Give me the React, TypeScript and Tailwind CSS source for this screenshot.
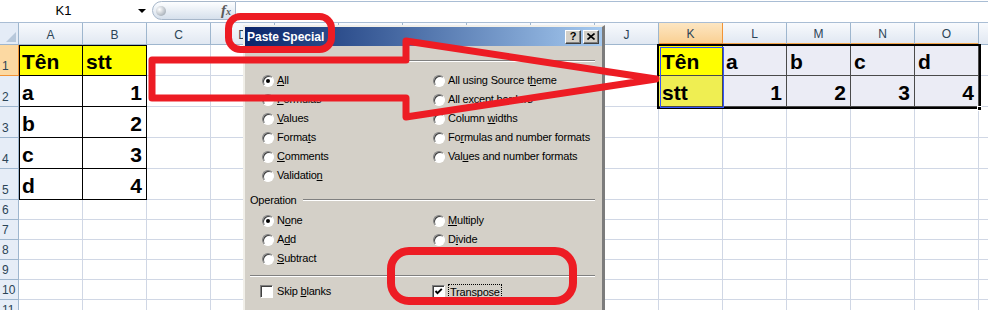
import React from "react";

const COLS = ["A", "B", "C", "D", "E", "F", "G", "H", "I", "J", "K", "L", "M", "N", "O", "P"];
const ROWS = [1, 2, 3, 4, 5, 6, 7, 8, 9, 10, 11];

const VALUES: Record<string, string> = {
  A1: "Tên", B1: "stt", A2: "a", B2: "1", A3: "b", B3: "2", A4: "c", B4: "3", A5: "d", B5: "4",
  K1: "Tên", L1: "a", M1: "b", N1: "c", O1: "d", K2: "stt", L2: "1", M2: "2", N2: "3", O2: "4",
};

const isNum = (v?: string) => !!v && /^\d+$/.test(v);

function cellClass(col: string, row: number) {
  const inLeft = (col === "A" || col === "B") && row <= 5;
  const inRight = ["K", "L", "M", "N", "O"].includes(col) && row <= 2;
  const cls: string[] = [];
  cls.push(inLeft ? "border-black" : inRight ? "border-[#4a4a4a]" : "border-[#d0d7e5]");
  if (inLeft) {
    if (col === "A" && row === 1) cls.push("shadow-[inset_1px_1px_0_#000]");
    else if (col === "A") cls.push("shadow-[inset_1px_0_0_#000]");
    else if (row === 1) cls.push("shadow-[inset_0_1px_0_#000]");
    if (row === 1) cls.push("bg-[#ffff00]");
  }
  if (inRight) {
    if (col === "K") cls.push(row === 1 ? "bg-[#ffff00]" : "bg-[#efee52]");
    else cls.push("bg-[#ebecf5]");
  }
  return cls.join(" ");
}

const FormulaBar = () => (
  <div className="flex h-[23px] items-start border-b border-[#a9bdd4] bg-white">
    <div className="flex h-[22px] w-[127px] items-center justify-center text-[13px] text-black">K1</div>
    <svg className="ml-[11px] mt-[9px]" width="8" height="4" viewBox="0 0 8 4">
      <polygon points="0,0 8,0 4,4" fill="#000" />
    </svg>
    <div className="ml-[6px] mt-[1px] flex h-[19px] w-[84px] items-center justify-between rounded-l-full rounded-r-[3px] border border-[#a7b7ca] bg-gradient-to-b from-[#fdfeff] to-[#d6e0ec] pl-[3px] pr-[4px]">
      <span className="h-[10px] w-[10px] rounded-full bg-[radial-gradient(circle_at_35%_35%,#ffffff,#8d98a4)]" />
      <span className="font-['Liberation_Serif',serif] text-[15px] font-bold italic leading-none text-[#5a5a5a]">
        f<span className="text-[10px]">x</span>
      </span>
    </div>
    <div className="mt-[1px] h-[21px] flex-1 border-t border-[#a9bdd4]" />
  </div>
);

const HeaderRow = () => (
  <div className="flex h-[22px]">
    <div className="flex w-[19px] shrink-0 items-end justify-end border-r border-b border-[#9eb6ce] bg-[#e4ecf7] p-[2px]">
      <svg width="10" height="10" viewBox="0 0 10 10">
        <polygon points="10,0 10,10 0,10" fill="#b7c8db" />
      </svg>
    </div>
    {COLS.map((c) => {
      const sel = ["L", "M", "N", "O"].includes(c);
      const cls =
        c === "K"
          ? "border-r border-b-2 border-[#f29436] bg-gradient-to-b from-[#fde6c2] to-[#f9d093]"
          : sel
            ? "border-r border-b-2 border-r-[#9eb6ce] border-b-[#f5a64a] bg-gradient-to-b from-[#f8fafd] to-[#e1e8f2]"
            : "border-r border-b border-[#9eb6ce] bg-gradient-to-b from-[#f8fafd] to-[#e1e8f2]";
      return (
        <div key={c} className={`flex w-[64px] shrink-0 items-center justify-center pt-[2px] text-[12px] text-[#2b4456] ${cls}`}>
          {c}
        </div>
      );
    })}
  </div>
);

const Grid = () => (
  <div>
    {ROWS.map((r) => (
      <div key={r} className={`flex ${r <= 5 ? "h-[31px]" : "h-[20px]"}`}>
        <div
          className={`flex w-[19px] shrink-0 items-end border-r border-b pb-[3px] pl-[2px] text-[12px] leading-none text-[#2b4456] ${
            r === 1 ? "border-[#f29436] bg-[#fcd9a2]" : "border-[#9eb6ce] bg-[#e6edf7]"
          }`}
        >
          {r}
        </div>
        {COLS.map((c) => {
          const v = VALUES[c + r];
          return (
            <div
              key={c}
              className={`flex w-[64px] shrink-0 items-end border-r border-b px-[3px] pb-[3px] text-[21px] font-bold leading-none text-black ${
                isNum(v) ? "justify-end pr-[4px]" : ""
              } ${cellClass(c, r)}`}
            >
              {v}
            </div>
          );
        })}
      </div>
    ))}
  </div>
);

const Radio = ({ on }: { on?: boolean }) => (
  <span className="flex h-[12px] w-[12px] shrink-0 items-center justify-center rounded-full border border-t-[#808080] border-l-[#808080] border-r-white border-b-white bg-white shadow-[inset_1px_1px_0_#404040]">
    {on && <span className="h-[4px] w-[4px] rounded-full bg-black" />}
  </span>
);

const Check = ({ on }: { on?: boolean }) => (
  <span className="flex h-[13px] w-[13px] shrink-0 items-center justify-center border border-t-[#808080] border-l-[#808080] border-r-white border-b-white bg-white shadow-[inset_1px_1px_0_#404040]">
    {on && (
      <svg width="9" height="9" viewBox="0 0 9 9">
        <path d="M1.5 4 L3.5 6.2 L7.8 1.8" stroke="#000" strokeWidth="1.9" fill="none" />
      </svg>
    )}
  </span>
);

const Label = ({ text, k }: { text: string; k: number }) => (
  <span className="whitespace-nowrap">
    {text.slice(0, k)}
    <span className="underline underline-offset-[1px]">{text[k]}</span>
    {text.slice(k + 1)}
  </span>
);

type Opt = { t: string; k: number; on?: boolean } | null;

const Option = ({ o }: { o: Opt }) =>
  o ? (
    <div className="flex items-center gap-[3px]">
      <Radio on={o.on} />
      <Label text={o.t} k={o.k} />
    </div>
  ) : (
    <div />
  );

const PASTE: Opt[] = [
  { t: "All", k: 0, on: true }, { t: "All using Source theme", k: 18 },
  { t: "Formulas", k: 0 }, { t: "All except borders", k: 5 },
  { t: "Values", k: 0 }, { t: "Column widths", k: 7 },
  { t: "Formats", k: 5 }, { t: "Formulas and number formats", k: 2 },
  { t: "Comments", k: 0 }, { t: "Values and number formats", k: 3 },
  { t: "Validation", k: 9 }, null,
];

const OPERATION: Opt[] = [
  { t: "None", k: 1, on: true }, { t: "Multiply", k: 0 },
  { t: "Add", k: 1 }, { t: "Divide", k: 1 },
  { t: "Subtract", k: 0 }, null,
];

const Etched = () => <div className="h-[2px] flex-1 border-t border-b border-t-[#808080] border-b-white" />;

const TitleButton = ({ children }: { children: React.ReactNode }) => (
  <span className="flex h-[14px] w-[16px] items-center justify-center border border-t-white border-l-white border-r-[#404040] border-b-[#404040] bg-[#d4d0c8] shadow-[inset_-1px_-1px_0_#808080] text-[11px] font-bold leading-none text-black">
    {children}
  </span>
);

const PasteSpecial = () => (
  <div className="absolute left-[243px] top-[25px] h-[300px] w-[362px] border-t-2 border-l-2 border-r-[3px] border-t-[#f1efe9] border-l-[#f1efe9] border-r-[#7c7c7c] bg-[#d4d0c8] text-[11px] tracking-[-0.2px] text-black">
    <div className="flex h-[19px] items-center justify-between bg-gradient-to-r from-[#0a246a] to-[#a6caf0] pl-[2px] pr-[3px]">
      <span className="text-[12px] font-bold tracking-normal text-white">Paste Special</span>
      <div className="flex gap-[2px]">
        <TitleButton>?</TitleButton>
        <TitleButton>
          <svg width="8" height="7" viewBox="0 0 8 7">
            <path d="M0.5 0.5 L7.5 6.5 M7.5 0.5 L0.5 6.5" stroke="#000" strokeWidth="1.6" />
          </svg>
        </TitleButton>
      </div>
    </div>
    <div className="pl-[5px] pr-[7px]">
      <div className="mt-[8px] flex h-[14px] items-center pl-[40px]">
        <Etched />
      </div>
      <div className="mt-[3px] grid grid-cols-[171px_1fr] auto-rows-[19px] items-center pl-[12px]">
        {PASTE.map((o, i) => (
          <Option key={i} o={o} />
        ))}
      </div>
      <div className="mt-[8px] flex h-[14px] items-center gap-[6px]">
        <span>Operation</span>
        <Etched />
      </div>
      <div className="mt-[4px] grid grid-cols-[171px_1fr] auto-rows-[19px] items-center pl-[12px]">
        {OPERATION.map((o, i) => (
          <Option key={i} o={o} />
        ))}
      </div>
      <div className="mt-[7px] flex">
        <Etched />
      </div>
      <div className="mt-[5px] grid h-[19px] grid-cols-[172px_1fr] items-center pl-[10px]">
        <div className="flex items-center gap-[4px]">
          <Check />
          <Label text="Skip blanks" k={5} />
        </div>
        <div className="flex items-center gap-[3px]">
          <Check on />
          <span className="border border-dotted border-black px-[1px] leading-[14px]">
            <Label text="Transpose" k={8} />
          </span>
        </div>
      </div>
    </div>
  </div>
);

const Annotations = () => (
  <svg className="pointer-events-none absolute inset-0" width="988" height="310" viewBox="0 0 988 310">
    <g fill="none" stroke="#ed1c24" strokeWidth="7" strokeLinejoin="round">
      <rect x="228.5" y="16.5" width="103" height="33" rx="12" />
      <polygon points="152,60 406,60 406,41 656,79 406,117 406,98 152,98" />
      <rect x="391" y="251" width="182" height="50" rx="18" strokeWidth="8" />
    </g>
  </svg>
);

export default function App() {
  return (
    <div className="relative h-[310px] w-[988px] overflow-hidden bg-white font-['Liberation_Sans',Arial,sans-serif]">
      <FormulaBar />
      <HeaderRow />
      <Grid />
      {/* selection frame K1:O2 */}
      <div className="absolute left-[657px] top-[44px] h-[65px] w-[324px] border-2 border-black">
        <div className="ml-[1px] mt-[1px] h-[61px] w-[64px] border border-[#3355ff]" />
      </div>
      <div className="absolute left-[977px] top-[106px] h-[5px] w-[5px] border border-white bg-black" />
      <PasteSpecial />
      <Annotations />
    </div>
  );
}
